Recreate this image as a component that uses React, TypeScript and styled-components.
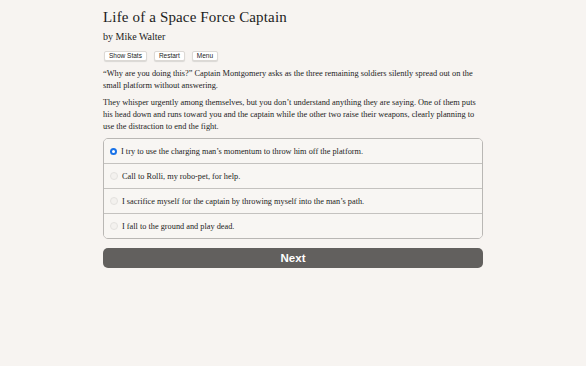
import React, { useState } from 'react';
import styled, { createGlobalStyle } from 'styled-components';

const GlobalStyle = createGlobalStyle`
  html, body {
    margin: 0;
    padding: 0;
    background: #f7f4f1;
  }
  body {
    font-family: "Liberation Serif", "DejaVu Serif", serif;
    color: #1c1c1c;
  }
`;

const Page = styled.div`
  width: 380px;
  margin: 0 auto;
  padding: 8px 0 20px 0;
`;

const Title = styled.h1`
  font-size: 15px;
  font-weight: 400;
  margin: 0;
  line-height: 18px;
  letter-spacing: 0.15px;
`;

const Byline = styled.h2`
  font-size: 10px;
  font-weight: 400;
  margin: 5px 0 0 0;
  line-height: 12px;
`;

const Toolbar = styled.div`
  display: flex;
  gap: 7px;
  margin-top: 8px;
  margin-left: 1px;
`;

const SmallButton = styled.button`
  font-family: "Liberation Sans", Arial, sans-serif;
  font-size: 6.5px;
  color: #222;
  background: #fff;
  border: 1px solid #dcd9d5;
  border-radius: 2px;
  box-shadow: 0 1px 1px rgba(0, 0, 0, 0.12);
  padding: 1px 4px;
  height: 10px;
  line-height: 6px;
  cursor: pointer;
`;

const Paragraph = styled.p`
  font-size: 8.35px;
  line-height: 12px;
  margin: 5px 0 0 0;
  &:first-of-type {
    margin-top: 7px;
  }
`;

const Choices = styled.div`
  margin-top: 5px;
  border: 1px solid #b9b7b4;
  border-radius: 5px;
  overflow: hidden;
`;

const ChoiceRow = styled.label<{ selected?: boolean }>`
  display: flex;
  align-items: center;
  gap: 4px;
  height: 24px;
  padding: 0 6px;
  font-size: 8.3px;
  background: #f8f6f3;
  border-top: 1px solid #c4c2bf;
  cursor: pointer;
  &:first-child {
    border-top: none;
  }
`;

const Radio = styled.span<{ checked?: boolean }>`
  border-radius: 50%;
  flex: none;
  box-sizing: content-box;
  background: ${p => (p.checked ? '#fff' : '#f3f1ee')};
  border: ${p => (p.checked ? '2px solid #1a73e8' : '1px solid #e4e2df')};
  width: ${p => (p.checked ? '3px' : '6px')};
  height: ${p => (p.checked ? '3px' : '6px')};
`;

const NextButton = styled.button`
  display: block;
  width: 100%;
  margin-top: 9px;
  height: 20px;
  border: none;
  border-radius: 5px;
  background: #62605e;
  color: #fff;
  font-family: "Liberation Sans", Arial, sans-serif;
  font-weight: 700;
  font-size: 11.5px;
  cursor: pointer;
`;

const options = [
  "I try to use the charging man\u2019s momentum to throw him off the platform.",
  'Call to Rolli, my robo-pet, for help.',
  "I sacrifice myself for the captain by throwing myself into the man\u2019s path.",
  'I fall to the ground and play dead.',
];

export default function App() {
  const [selected, setSelected] = useState(0);

  return (
    <>
      <GlobalStyle />
      <Page>
        <Title>Life of a Space Force Captain</Title>
        <Byline>by Mike Walter</Byline>
        <Toolbar>
          <SmallButton>Show Stats</SmallButton>
          <SmallButton>Restart</SmallButton>
          <SmallButton>Menu</SmallButton>
        </Toolbar>
        <Paragraph>
          &ldquo;Why are you doing this?&rdquo; Captain Montgomery asks as the three remaining soldiers silently spread out on the small platform without answering.
        </Paragraph>
        <Paragraph>
          They whisper urgently among themselves, but you don&rsquo;t understand anything they are saying. One of them puts his head down and runs toward you and the captain while the other two raise their weapons, clearly planning to use the distraction to end the fight.
        </Paragraph>
        <Choices>
          {options.map((text, i) => (
            <ChoiceRow key={i} selected={i === selected} onClick={() => setSelected(i)}>
              <Radio checked={i === selected} />
              {text}
            </ChoiceRow>
          ))}
        </Choices>
        <NextButton>Next</NextButton>
      </Page>
    </>
  );
}
